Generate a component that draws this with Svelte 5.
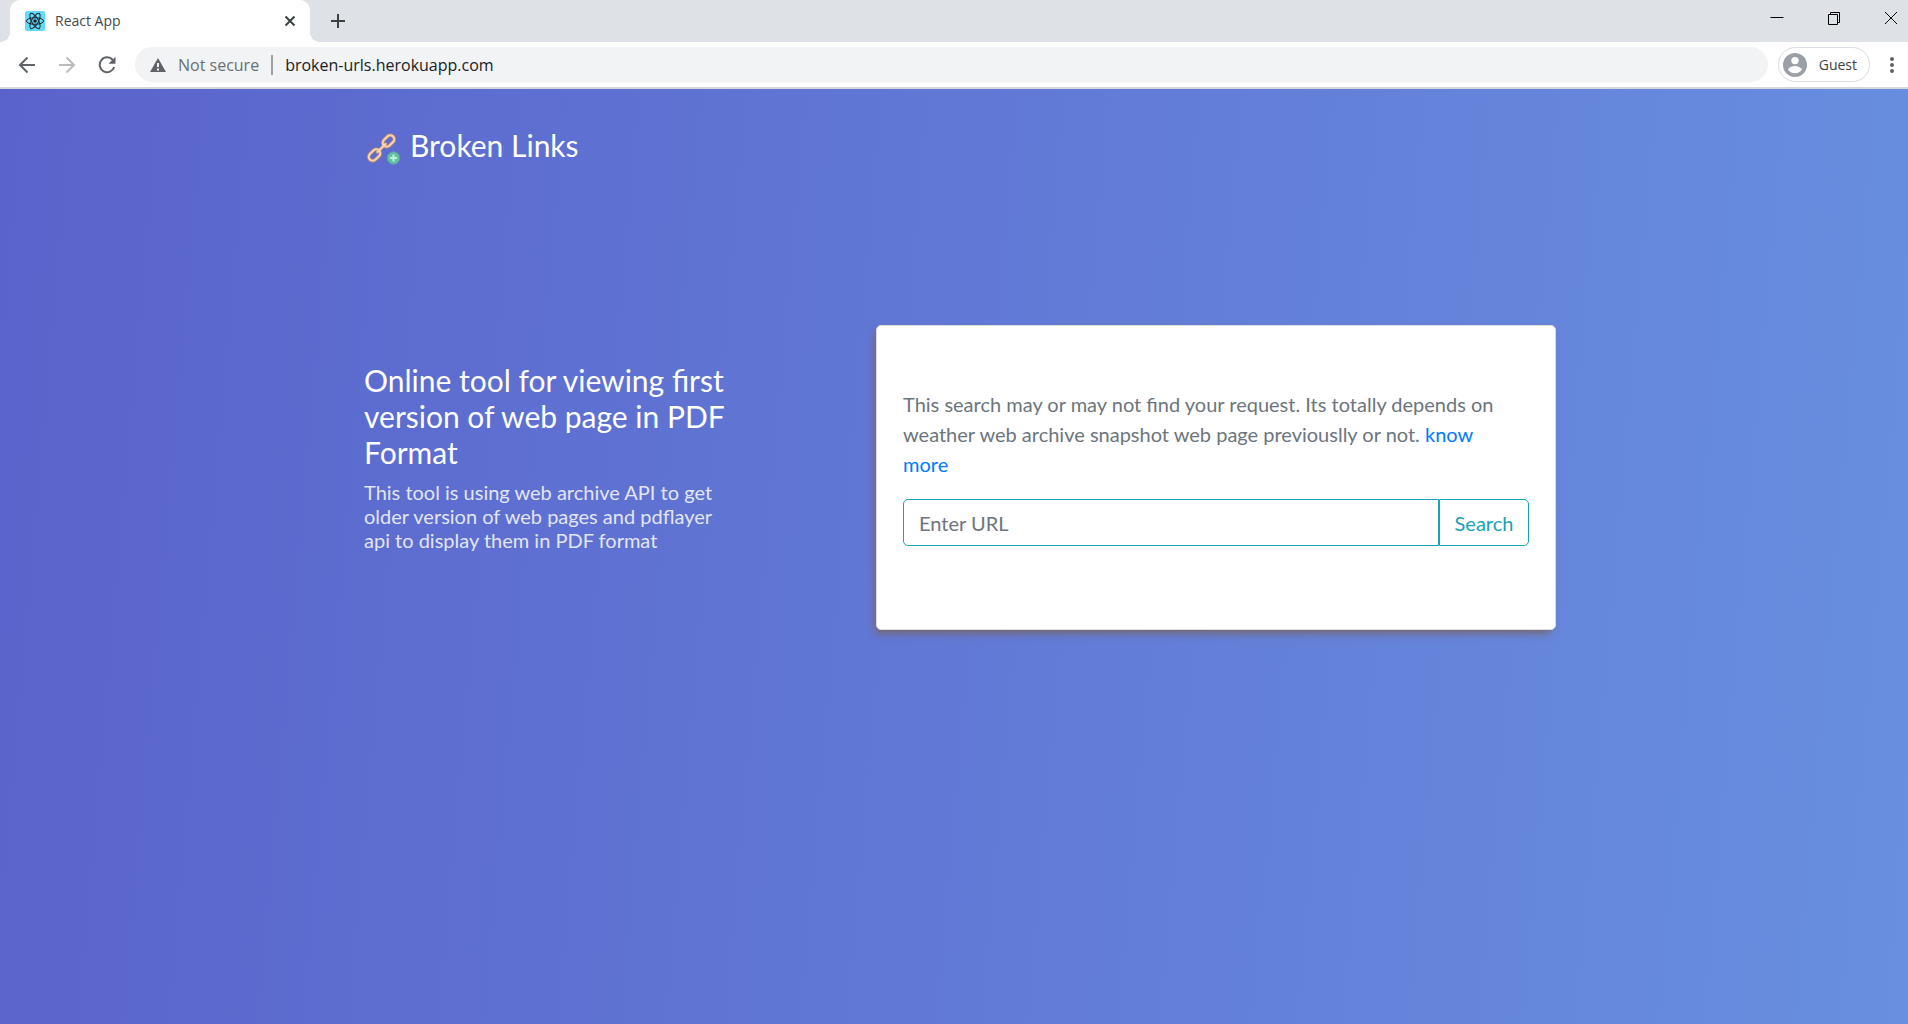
<script lang="ts">
  let url = $state('');
  let address = $state('broken-urls.herokuapp.com');
  const search = (event: SubmitEvent) => event.preventDefault();
</script>

<div class="window">
  <header class="chrome">
    <div class="tabs">
      <div class="tab">
        <svg class="favicon" viewBox="0 0 20 20" aria-hidden="true">
          <rect width="20" height="20" rx="2" fill="#61dafb" />
          <g fill="none" stroke="#20232a" stroke-width="1">
            <ellipse cx="10" cy="10" rx="8.6" ry="3.3" />
            <ellipse cx="10" cy="10" rx="8.6" ry="3.3" transform="rotate(60 10 10)" />
            <ellipse cx="10" cy="10" rx="8.6" ry="3.3" transform="rotate(120 10 10)" />
          </g>
          <circle cx="10" cy="10" r="1.8" fill="#20232a" />
        </svg>
        <span class="title">React App</span>
        <button class="icon small" aria-label="Close tab">
          <svg viewBox="0 0 12 12"><path d="M1.5 1.5 10.500 10.500M10.500 1.500 1.500 10.500" stroke="#3c4043" stroke-width="2" /></svg>
        </button>
      </div>
      <button class="icon new" aria-label="New tab">
        <svg viewBox="0 0 16 16"><path d="M8 1v14M1 8h14" stroke="#3c4043" stroke-width="2" /></svg>
      </button>
      <div class="controls">
        <button aria-label="Minimize"><svg viewBox="0 0 14 14"><path d="M.5 6.500h13" stroke="#000" /></svg></button>
        <button aria-label="Restore"><svg viewBox="0 0 14 14"><path d="M1.500 3.500h9v10h-9zM3.500 3.500v-2h9v10h-2" fill="none" stroke="#000" /></svg></button>
        <button aria-label="Close"><svg viewBox="0 0 14 14"><path d="M1 1l12 12M13 1 1 13" stroke="#000" /></svg></button>
      </div>
    </div>
    <div class="toolbar">
      <button class="icon" aria-label="Back">
        <svg viewBox="0 0 18 18"><path d="M17 9H2M9.500 1.500 2 9l7.500 7.500" fill="none" stroke="#5f6368" stroke-width="2" /></svg>
      </button>
      <button class="icon" aria-label="Forward" disabled>
        <svg viewBox="0 0 18 18"><path d="M1 9h15M8.500 1.500 16 9l-7.500 7.500" fill="none" stroke="#babcbe" stroke-width="2" /></svg>
      </button>
      <button class="icon" aria-label="Reload">
        <svg viewBox="0 0 18 18"><path d="M14.800 4A7.400 7.400 0 1 0 16.200 11" fill="none" stroke="#5f6368" stroke-width="2" /><path d="M17.500 .8v7h-7z" fill="#5f6368" /></svg>
      </button>
      <div class="omnibox">
        <svg class="warn" viewBox="0 0 16 14" aria-hidden="true"><path d="M8 0 16 14H0z" fill="#5f6368" /><path d="M8 5v4M8 10.500v2" stroke="#f1f3f4" stroke-width="2" /></svg>
        <span class="status">Not secure</span>
        <span class="bar"></span>
        <input aria-label="Address" bind:value={address} />
      </div>
      <button class="profile">
        <svg viewBox="0 0 24 24" aria-hidden="true"><circle cx="12" cy="12" r="12" fill="#9aa0a6" /><circle cx="12" cy="7.600" r="3.700" fill="#fff" /><path d="M4.800 16.500c1.500-2.300 4.200-3.500 7.200-3.500s5.700 1.200 7.200 3.500c-1.600 2.300-4.200 3.700-7.200 3.700s-5.600-1.400-7.200-3.700z" fill="#fff" /></svg>
        Guest
      </button>
      <button class="icon menu" aria-label="Menu">
        <svg viewBox="0 0 18 18"><g fill="#5f6368"><circle cx="10" cy="3" r="2" /><circle cx="10" cy="9" r="2" /><circle cx="10" cy="15" r="2" /></g></svg>
      </button>
    </div>
  </header>

  <main>
    <div class="container">
      <a class="brand" href="/">
        <svg viewBox="0 -1 36 36" aria-hidden="true">
          <g fill="none" stroke-linecap="round">
            <g stroke="#a57f8e" stroke-width="3.800">
              <rect x="-6.500" y="-4" width="13" height="8" rx="4" transform="translate(22.500 11) rotate(-45)" />
              <rect x="-6.500" y="-4" width="13" height="8" rx="4" transform="translate(8.500 25) rotate(-45)" />
              <path d="M11.500 22 19.500 14" />
            </g>
            <g stroke="#fbd5a0" stroke-width="2.200">
              <rect x="-6.500" y="-4" width="13" height="8" rx="4" transform="translate(22.500 11) rotate(-45)" />
              <rect x="-6.500" y="-4" width="13" height="8" rx="4" transform="translate(8.500 25) rotate(-45)" />
              <path d="M11.500 22 19.500 14" />
            </g>
            <path d="M4 16c1-3 4-7 8-9" stroke="#8467ae" stroke-dasharray="3 3" />
          </g>
          <circle cx="27.500" cy="28" r="6.300" fill="#5cc4a0" stroke="#6f8db0" />
          <path d="M27.500 24.500v7M24 28h7" stroke="#c5efdc" stroke-width="2" />
        </svg>
        Broken Links
      </a>
      <div class="row">
        <section class="intro">
          <h1>Online tool for viewing first version of web page in PDF Format</h1>
          <p>This tool is using web archive API to get older version of web pages and pdflayer api to display them in PDF format</p>
        </section>
        <section class="card">
          <p>This search may or may not find your request. Its totally depends on weather web archive snapshot web page previouslly or not. <a href="#more">know more</a></p>
          <form onsubmit={search}>
            <input type="text" placeholder="Enter URL" aria-label="Enter URL" bind:value={url} />
            <button type="submit">Search</button>
          </form>
        </section>
      </div>
    </div>
  </main>
</div>

<style>
  :global(body) { margin: 0; }
  * { box-sizing: border-box; }
  .window { min-height: 100vh; display: flex; flex-direction: column; font-family: "Open Sans", "Noto Sans", sans-serif; }
  button { border: 0; padding: 0; background: none; font: inherit; color: inherit; cursor: pointer; }
  svg { display: block; flex: none; }

  .chrome { background: #fff; border-bottom: 2px solid #d5d7da; }
  .tabs { display: flex; align-items: stretch; height: 42px; padding-left: 10px; background: #dee1e6; }
  .tab { position: relative; display: flex; align-items: center; width: 300px; padding: 0 14px 0 15px; background: #fff; border-radius: 10px 10px 0 0; }
  .tab::before, .tab::after { content: ""; position: absolute; bottom: 0; width: 10px; height: 10px; }
  .tab::before { left: -10px; background: radial-gradient(circle at 0 0, #dee1e6 10px, #fff 10px); }
  .tab::after { right: -10px; background: radial-gradient(circle at 100% 0, #dee1e6 10px, #fff 10px); }
  .favicon { width: 20px; height: 20px; }
  .title { flex: 1; margin-left: 10px; padding-bottom: 2px; font-size: 14px; color: #45494d; }
  .icon { display: grid; place-items: center; width: 40px; }
  .icon svg { width: 18px; height: 18px; }
  .small { width: 12px; }
  .small svg { width: 12px; height: 12px; }
  .new { margin-left: 8px; }
  .new svg { width: 16px; height: 16px; }
  .controls { display: flex; margin-left: auto; }
  .controls button { display: grid; place-items: center; width: 57px; height: 36px; }
  .controls button:last-child { width: 34px; margin-left: 12px; }
  .controls svg { width: 14px; height: 14px; }

  .toolbar { display: flex; align-items: center; padding: 5px 0 5px 7px; height: 45px; }
  .omnibox { flex: 1; display: flex; align-items: center; height: 35px; margin-left: 8px; padding-left: 15px; border-radius: 18px; background: #f1f3f4; font-size: 16px; }
  .warn { width: 16px; height: 14px; margin-right: 12px; }
  .status { color: #6b6f73; }
  .bar { width: 2px; height: 20px; margin: 0 12px; background: #9c9fa3; }
  .omnibox input { flex: 1; border: 0; padding: 0; background: none; font: inherit; color: #202124; outline: 0; }
  .profile { display: flex; align-items: center; gap: 12px; height: 35px; margin-left: 10px; padding: 0 12px 0 4px; border: 1px solid #dadce0; border-radius: 18px; font-size: 14px; color: #3c4043; }
  .profile svg { width: 24px; height: 24px; }
  .menu { width: 34px; margin-left: 4px; }

  main { flex: 1; background: linear-gradient(95deg, #5a63cb, #688fe0); font-family: Lato, "Open Sans", sans-serif; color: #fff; }
  .container { width: 100%; max-width: 1204px; margin: 0 auto; padding-left: 12px; }
  .brand { display: flex; align-items: flex-end; gap: 8px; width: max-content; padding: 36px 0 0 2px; font-size: 30px; line-height: 40px; color: #fff; text-decoration: none; }
  .brand svg { width: 36px; height: 36px; }
  .row { display: flex; align-items: flex-start; justify-content: space-between; padding-top: 160px; }
  .intro { width: 364px; padding-top: 37px; }
  h1 { margin: 0 0 10px; font-size: 30px; line-height: 36px; font-weight: 400; }
  .intro p { margin: 0; font-size: 20px; line-height: 24px; color: #e2e5f3; }
  .card { width: 680px; min-height: 305px; padding: 63px 26px; border: 1px solid #dcdcdf; border-radius: 5px; background: #fff; box-shadow: -3px 5px 8px -2px #7a6565; color: #6c757d; font-size: 20px; line-height: 30px; }
  .card p { margin: 0 0 20px; padding-right: 20px; }
  .card a { color: #007bff; text-decoration: none; }
  form { display: flex; height: 47px; color: #17a2b8; }
  form input { flex: 1; min-width: 0; padding: 0 15px; border: 1px solid; border-color: #17a2b8; border-radius: 5px 0 0 5px; background: #fff; font: inherit; color: #495057; }
  form input::placeholder { color: #6c757d; opacity: 1; }
  form button { width: 90px; border: 1px solid #17a2b8; border-radius: 0 5px 5px 0; }
</style>
